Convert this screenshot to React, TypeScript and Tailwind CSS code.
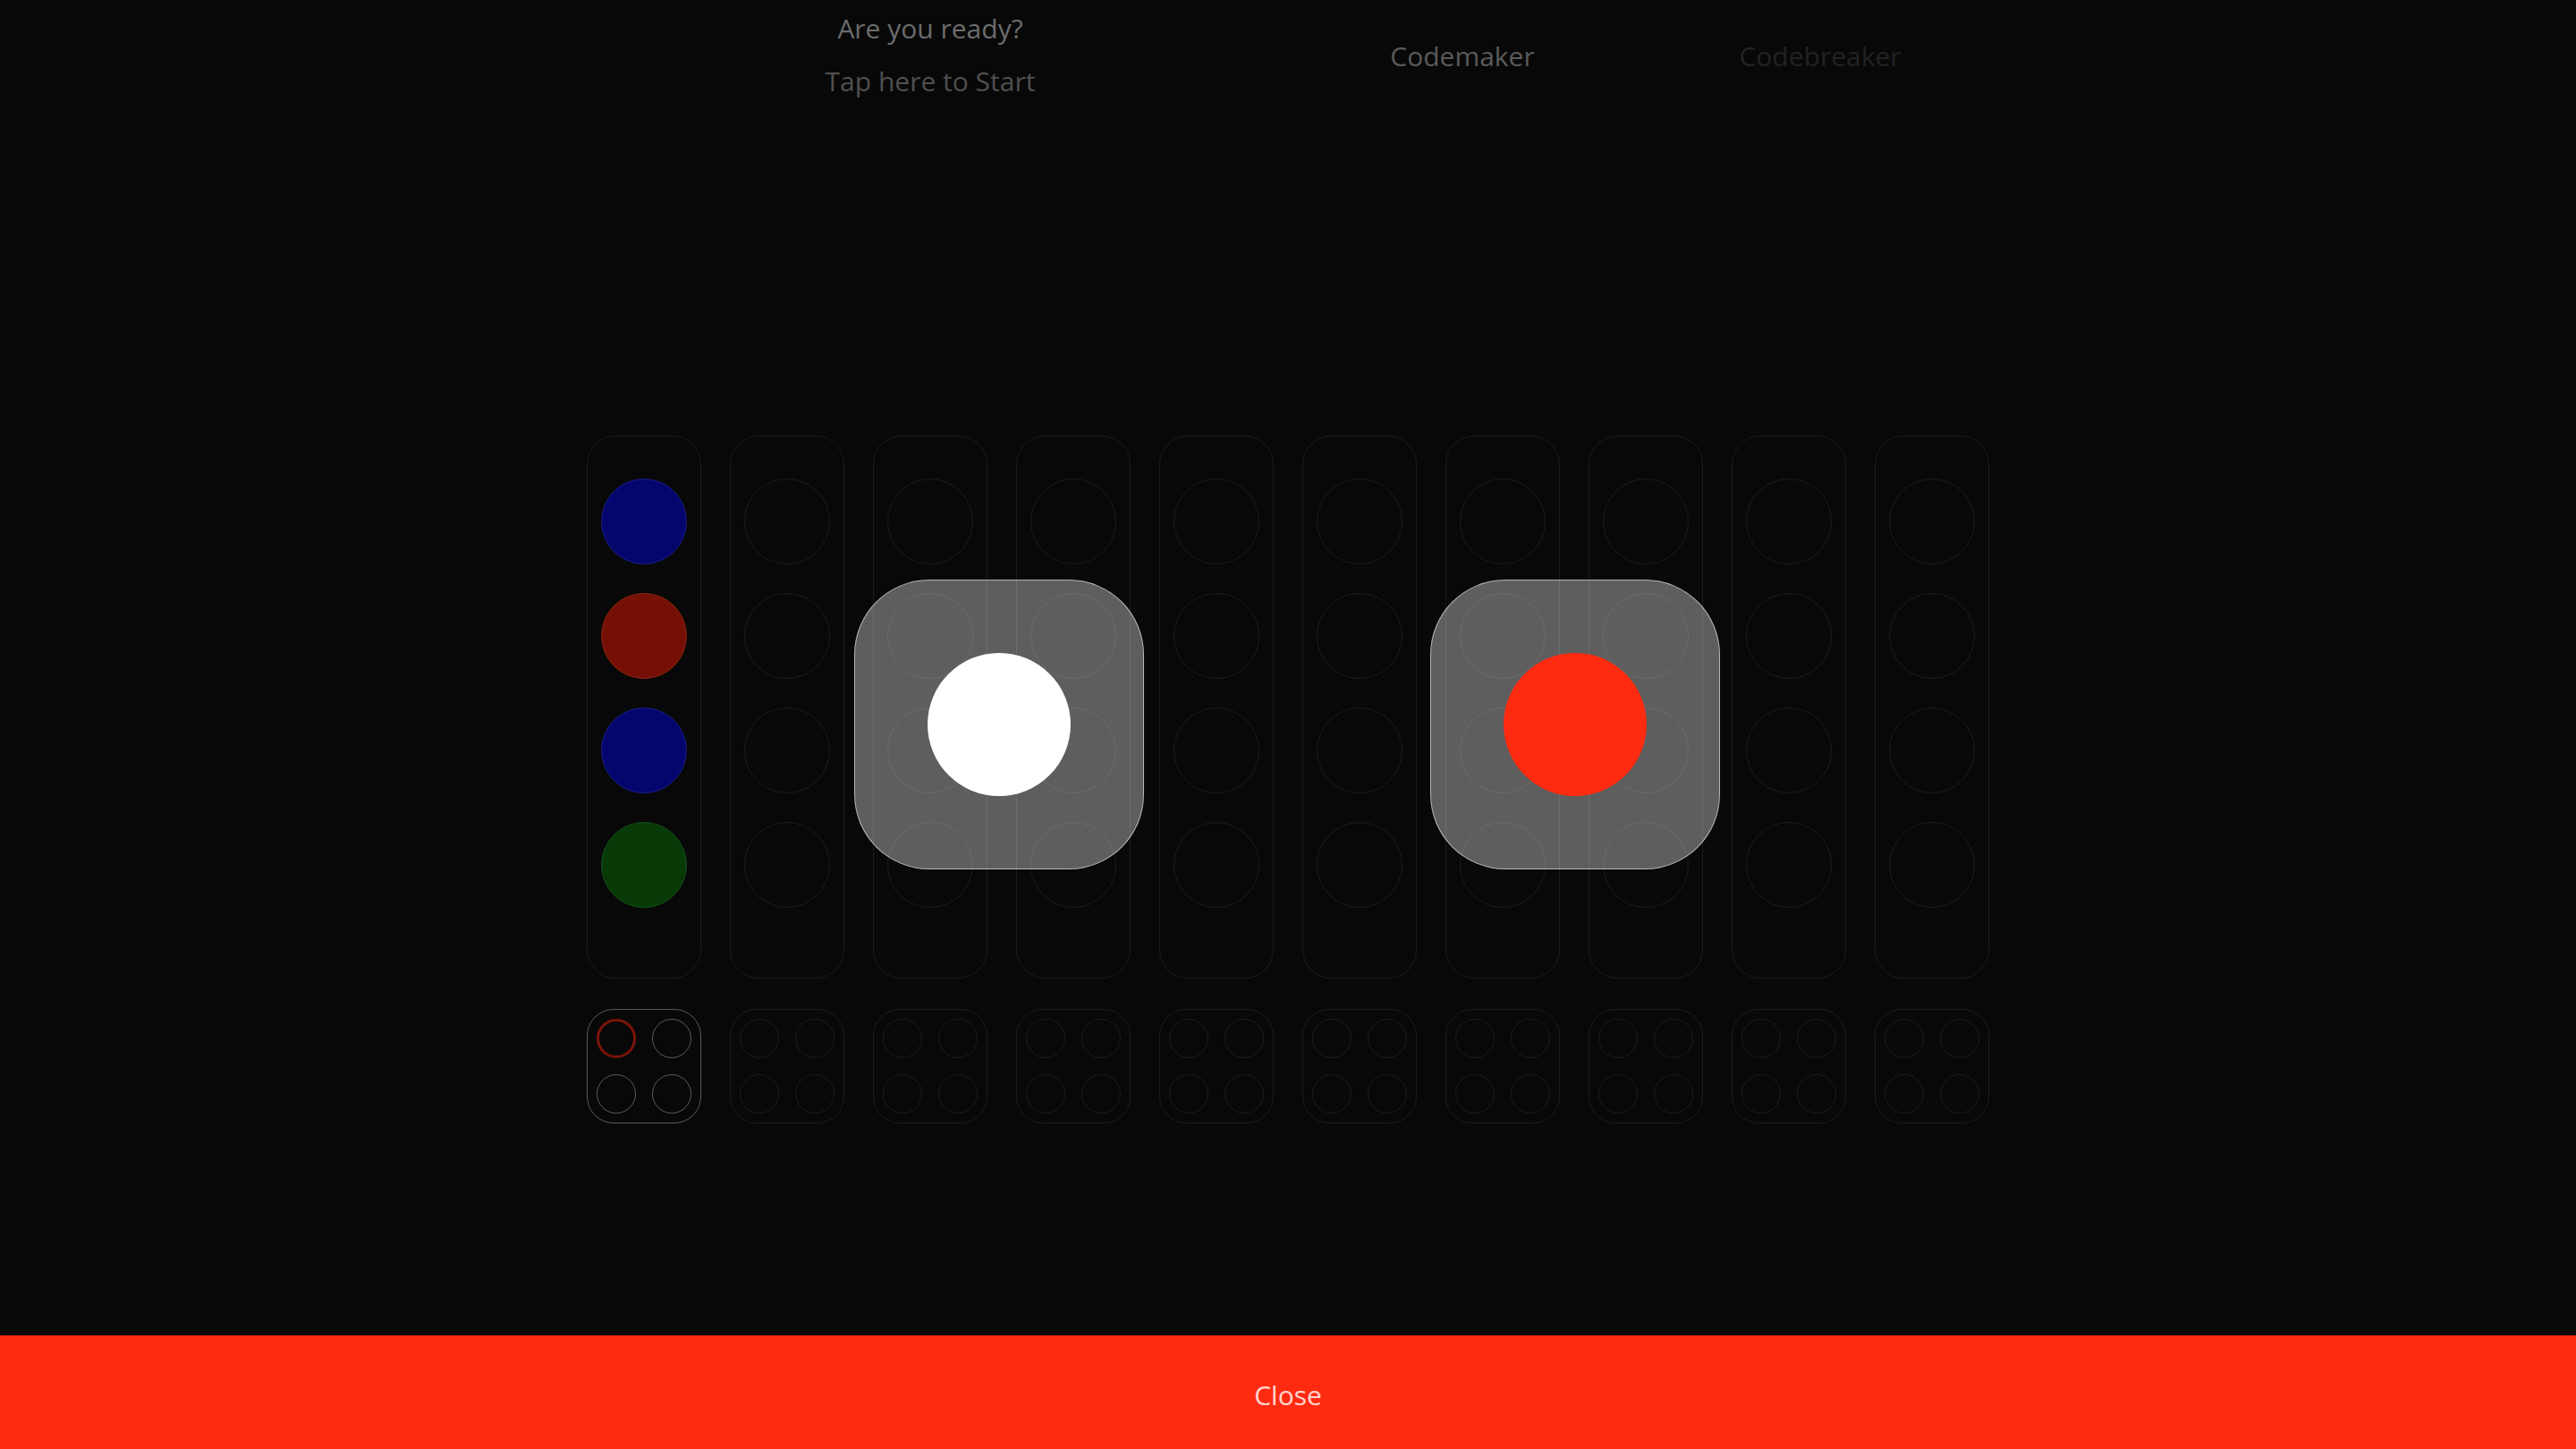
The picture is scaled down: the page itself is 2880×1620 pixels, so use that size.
import React from "react";

const pegs = ["#04066e", "#760f06", "#04066e", "#073a07"];
const pegBorders = ["#1a1f86", "#8a2414", "#1a1f86", "#17501a"];

function Column({ index }: { index: number }) {
  return (
    <div className="w-[128px] h-[607px] rounded-[32px] border border-[#1c1c1c] flex flex-col items-center pt-[47px] gap-[32px]">
      {[0, 1, 2, 3].map((i) =>
        index === 0 ? (
          <div
            key={i}
            className="w-[96px] h-[96px] rounded-full border-[1.5px]"
            style={{ backgroundColor: pegs[i], borderColor: pegBorders[i] }}
          />
        ) : (
          <div key={i} className="w-[96px] h-[96px] rounded-full border-[1.5px] border-[#1c1c1c]" />
        )
      )}
    </div>
  );
}

function Feedback({ index }: { index: number }) {
  const active = index === 0;
  return (
    <div
      className={`w-[128px] h-[128px] rounded-[30px] border p-[10px] grid grid-cols-2 gap-[18px] ${
        active ? "border-[#5a5a5a]" : "border-[#1c1c1c]"
      }`}
    >
      {[0, 1, 2, 3].map((i) => (
        <div
          key={i}
          className={
            active
              ? i === 0
                ? "w-[44px] h-[44px] rounded-full border-[3px] border-[#7a1408]"
                : "w-[44px] h-[44px] rounded-full border-[1.5px] border-[#5a5a5a]"
              : "w-[44px] h-[44px] rounded-full border-[1.5px] border-[#1c1c1c]"
          }
        />
      ))}
    </div>
  );
}

export default function App() {
  const cols = Array.from({ length: 10 }, (_, i) => i);
  return (
    <div
      className="w-[2880px] h-[1620px] bg-[#080808] flex flex-col overflow-hidden"
      style={{ fontFamily: '"Open Sans", "Noto Sans", sans-serif' }}
    >
      <div className="h-[487px] flex flex-row items-start pl-[840px]">
        <div className="w-[400px] flex flex-col items-center pt-[12px]">
          <div className="text-[30px] leading-[40px] text-[#6c6c6c]">Are you ready?</div>
          <div className="mt-[19px] text-[30px] leading-[40px] text-[#4f4f4f]">Tap here to Start</div>
        </div>
        <div className="ml-[295px] w-[200px] flex justify-center pt-[43px]">
          <div className="text-[30px] leading-[40px] text-[#5a5a5a]">Codemaker</div>
        </div>
        <div className="ml-[200px] w-[200px] flex justify-center pt-[43px]">
          <div className="text-[30px] leading-[40px] text-[#222222]">Codebreaker</div>
        </div>
      </div>

      <div className="relative w-[1568px] mx-auto">
        <div className="flex flex-row gap-[32px]">
          {cols.map((i) => (
            <Column key={i} index={i} />
          ))}
        </div>
        <div className="flex flex-row gap-[32px] mt-[34px]">
          {cols.map((i) => (
            <Feedback key={i} index={i} />
          ))}
        </div>

        <div className="absolute left-[299px] top-[161px] w-[324px] h-[324px] rounded-[84px] bg-white/35 border-[1.5px] border-white/55 flex items-center justify-center">
          <div className="w-[160px] h-[160px] rounded-full bg-white" />
        </div>
        <div className="absolute left-[943px] top-[161px] w-[324px] h-[324px] rounded-[84px] bg-white/35 border-[1.5px] border-white/55 flex items-center justify-center">
          <div className="w-[160px] h-[160px] rounded-full bg-[#ff2b10]" />
        </div>
      </div>

      <div className="flex-1" />

      <div className="h-[127px] bg-[#ff2b10] flex items-center justify-center pt-[6px]">
        <span className="text-[30px] leading-[40px] text-white/80">Close</span>
      </div>
    </div>
  );
}
